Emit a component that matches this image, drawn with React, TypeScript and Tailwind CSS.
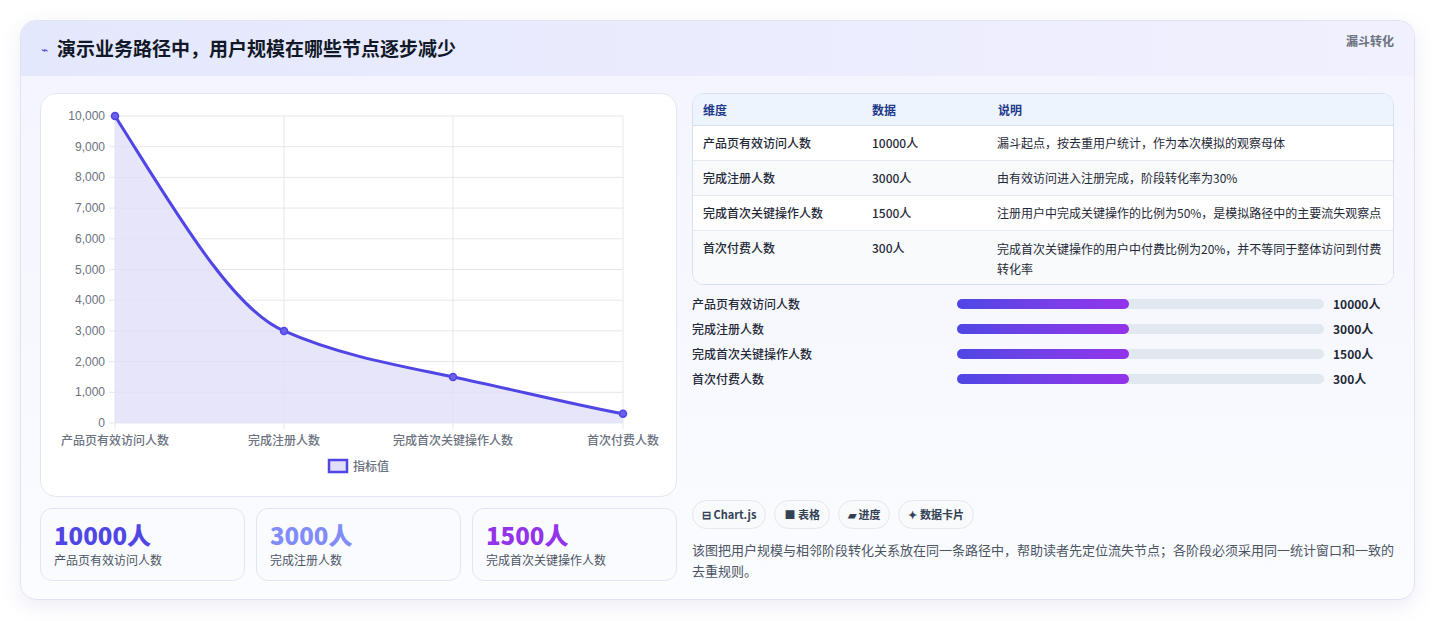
const rows = [
  { name: '产品页有效访问人数', value: '10000人', note: '漏斗起点，按去重用户统计，作为本次模拟的观察母体' },
  { name: '完成注册人数', value: '3000人', note: '由有效访问进入注册完成，阶段转化率为30%' },
  { name: '完成首次关键操作人数', value: '1500人', note: '注册用户中完成关键操作的比例为50%，是模拟路径中的主要流失观察点' },
  { name: '首次付费人数', value: '300人', note: '完成首次关键操作的用户中付费比例为20%，并不等同于整体访问到付费转化率' },
]

function Chart() {
  const left = 74
  const right = 582
  const top = 22
  const bottom = 329
  const ys = [0, 1, 2, 3, 4, 5, 6, 7, 8, 9, 10]
  const xs = [74, 243, 412, 582]
  const y = (v: number) => bottom - (v / 10000) * (bottom - top)
  const pts = [10000, 3000, 1500, 300].map((v, i) => [xs[i], y(v)])
  const line = `M74,${pts[0][1]} C130,110 190,215 243,${pts[1][1]} C300,262 360,272 412,${pts[2][1]} C470,295 530,310 582,${pts[3][1]}`
  const labels = ['产品页有效访问人数', '完成注册人数', '完成首次关键操作人数', '首次付费人数']
  return (
    <svg width="636" height="400" className="block" style={{ fontFamily: '"Noto Sans CJK SC", sans-serif' }}>
      {ys.map((k) => (
        <g key={k}>
          <line x1={left - 6} x2={right} y1={y(k * 1000)} y2={y(k * 1000)} stroke="#e5e7eb" />
          <text x={left - 10} y={y(k * 1000) + 4} textAnchor="end" fontSize="12" fill="#6b7280" fontFamily="Liberation Sans, sans-serif">
            {(k * 1000).toLocaleString('en-US')}
          </text>
        </g>
      ))}
      {xs.map((x) => (
        <line key={x} x1={x} x2={x} y1={top} y2={bottom + 6} stroke="#e5e7eb" />
      ))}
      <path d={`${line} L582,${bottom} L74,${bottom} Z`} fill="#e0def8" fillOpacity="0.8" />
      <path d={line} fill="none" stroke="#4f46e5" strokeWidth="3" />
      {pts.map(([px, py]) => (
        <circle key={px} cx={px} cy={py} r="3.5" fill="#6d5fe8" stroke="#4f46e5" strokeWidth="1.5" />
      ))}
      {labels.map((l, i) => (
        <text key={l} x={xs[i]} y={351} textAnchor="middle" fontSize="12" fontWeight="500" fill="#6b7280">
          {l}
        </text>
      ))}
      <rect x="288" y="366" width="18" height="12" fill="#e0def8" stroke="#4f46e5" strokeWidth="2.5" />
      <text x="312" y="377" fontSize="12" fontWeight="500" fill="#6b7280">指标值</text>
    </svg>
  )
}

export default function App() {
  return (
    <div className="min-h-[621px] bg-white px-5 py-5" style={{ fontFamily: '"Noto Sans CJK SC", "Noto Sans", sans-serif' }}>
      <div className="overflow-hidden rounded-2xl border border-[#dfe3f3] bg-gradient-to-b from-[#f3f4fe] to-[#fbfcff] shadow-[0_6px_20px_rgba(100,110,180,0.12)]">
        <div className="flex h-[55px] items-center justify-between bg-gradient-to-r from-[#e4e8fd] to-[#f1f0fe] px-5">
          <div className="flex items-center gap-[9px]">
            <span className="text-[12px] text-[#4f46e5]">⌁</span>
            <h1 className="text-[19px] font-bold text-[#111827]">演示业务路径中，用户规模在哪些节点逐步减少</h1>
          </div>
          <span className="-mt-4 text-[12px] font-semibold text-[#6b7280]">漏斗转化</span>
        </div>
        <div className="flex gap-[15px] pb-[18px] pl-[19px] pr-5 pt-[17px]">
          <div className="flex w-[637px] flex-col gap-[11px]">
            <div className="h-[404px] rounded-2xl border border-[#e3e7f3] bg-white">
              <Chart />
            </div>
            <div className="grid grid-cols-3 gap-[11px]">
              {[
                ['10000人', '产品页有效访问人数', 'text-[#4f46e5]'],
                ['3000人', '完成注册人数', 'text-[#818cf8]'],
                ['1500人', '完成首次关键操作人数', 'text-[#9333ea]'],
              ].map(([v, l, c]) => (
                <div key={l} className="h-[73px] rounded-xl border border-[#dfe6f3] bg-[#fafbff] px-[13px] pt-[10px]">
                  <div className={`text-[24px] font-extrabold leading-[32px] ${c}`}>{v}</div>
                  <div className="text-[12px] text-[#4b5563]">{l}</div>
                </div>
              ))}
            </div>
          </div>
          <div className="flex w-[704px] flex-col">
            <div className="overflow-hidden rounded-xl border border-[#d7e0ef] bg-white text-[12px] text-[#1f2937]">
              <div className="flex h-[32px] items-center border-b border-[#d7e0ef] bg-[#eef4fe] font-semibold text-[#1e3a8a]">
                <div className="w-[169px] pl-[10px]">维度</div>
                <div className="w-[126px] pl-[10px]">数据</div>
                <div className="flex-1 pl-[10px]">说明</div>
              </div>
              {rows.map((r, i) => (
                <div key={r.name} className={`flex border-b border-[#e5e9f2] last:border-b-0 ${i % 2 ? 'bg-[#f8fafc]' : 'bg-white'} ${i === 3 ? 'h-[53px] pt-[8px]' : 'h-[35px] items-center'}`}>
                  <div className="w-[169px] pl-[10px] font-medium">{r.name}</div>
                  <div className="w-[126px] pl-[10px] font-medium">{r.value}</div>
                  <div className="flex-1 pl-[9px] pr-2 leading-[20px]">{r.note}</div>
                </div>
              ))}
            </div>
            <div className="mt-[9px] flex flex-col gap-[6px]">
              {rows.map((r) => (
                <div key={r.name} className="flex h-[19px] items-center text-[12px] font-medium text-[#1f2937]">
                  <div className="w-[265px]">{r.name}</div>
                  <div className="h-[10px] w-[367px] rounded-full bg-[#e2e8f0]">
                    <div className="h-full w-[172px] rounded-full bg-gradient-to-r from-[#4f46e5] to-[#9333ea]" />
                  </div>
                  <div className="ml-[9px] font-semibold">{r.value}</div>
                </div>
              ))}
            </div>
            <div className="mt-auto flex gap-[8px]">
              {['⊟ Chart.js', '■ 表格', '▰ 进度', '✦ 数据卡片'].map((t) => (
                <span key={t} className="flex h-[29px] items-center rounded-full border border-[#e2e8f0] bg-[#f8fafc] px-[9px] text-[11px] font-semibold text-[#334155]">
                  {t}
                </span>
              ))}
            </div>
            <p className="mt-[10px] text-[13px] leading-[21px] text-[#4b5563]">
              该图把用户规模与相邻阶段转化关系放在同一条路径中，帮助读者先定位流失节点；各阶段必须采用同一统计窗口和一致的去重规则。
            </p>
          </div>
        </div>
      </div>
    </div>
  )
}
